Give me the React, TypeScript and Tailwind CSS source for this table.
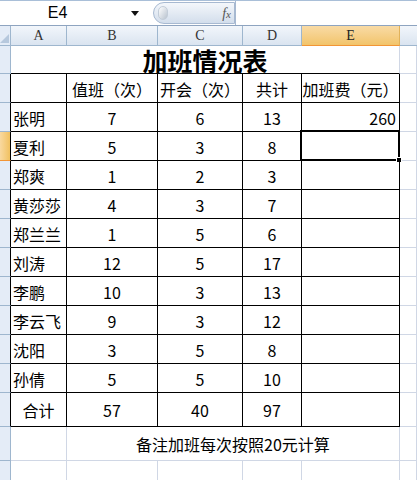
import React from 'react';

const rows: [string, string, string, string, string][] = [
  ['张明', '7', '6', '13', '260'],
  ['夏利', '5', '3', '8', ''],
  ['郑爽', '1', '2', '3', ''],
  ['黄莎莎', '4', '3', '7', ''],
  ['郑兰兰', '1', '5', '6', ''],
  ['刘涛', '12', '5', '17', ''],
  ['李鹏', '10', '3', '13', ''],
  ['李云飞', '9', '3', '12', ''],
  ['沈阳', '3', '5', '8', ''],
  ['孙倩', '5', '5', '10', ''],
];

const cjk = { fontFamily: '"Noto Sans CJK SC", "Noto Sans", sans-serif' };

function RowHead({ active, dark }: { active?: boolean; dark?: boolean }) {
  return (
    <div
      className={
        'border-b border-r ' +
        (active
          ? 'bg-gradient-to-r from-[#f9d99f] to-[#f1c15f] border-b-[#f29536] '
          : 'bg-[#e4ecf7] border-b-[#9eb6ce] ') +
        (dark ? 'border-r-black' : 'border-r-[#9eb6ce]')
      }
    />
  );
}

function Cell({
  children,
  align = 'center',
  selected,
}: {
  children?: React.ReactNode;
  align?: 'left' | 'center' | 'right';
  selected?: boolean;
}) {
  const a = align === 'left' ? 'justify-start pl-[2px]' : align === 'right' ? 'justify-end pr-[3px]' : 'justify-center';
  return (
    <div className={'relative flex items-center pt-[1px] border-b border-r border-black text-[16px] text-black leading-none whitespace-nowrap ' + a}>
      {children}
      {selected && (
        <div className="absolute -left-[2px] -top-[2px] -right-[1px] -bottom-[1px] border-2 border-black">
          <div className="absolute -right-[4px] -bottom-[4px] h-[6px] w-[6px] bg-black border border-white" />
        </div>
      )}
    </div>
  );
}

function Grey({ className = '' }: { className?: string }) {
  return <div className={'border-b border-r border-[#d0d7e5] ' + className} />;
}

export default function App() {
  const cols = ['A', 'B', 'C', 'D', 'E'];
  return (
    <div className="h-[480px] w-[417px] overflow-hidden bg-white flex flex-col" style={cjk}>
      <div className="h-[4px] bg-[#cfdcec] border-b border-[#a9bfd8]" />
      <div className="h-[25px] flex items-center bg-white">
        <div className="w-[115px] text-center text-[16px] text-black" style={{ fontFamily: '"Liberation Sans", Arial, sans-serif' }}>
          E4
        </div>
        <div className="w-[38px] flex justify-center">
          <svg width="8" height="5" viewBox="0 0 8 5" className="ml-[2px]">
            <path d="M0 0 L8 0 L4 5 Z" fill="#111" />
          </svg>
        </div>
        <div className="relative h-[22px] w-[82px] rounded-l-full border border-[#a7b9d1] bg-gradient-to-b from-[#f4f7fb] to-[#d3deec] flex items-center justify-end pr-[3px]">
          <div className="absolute left-[4px] top-[3px] h-[14px] w-[10px] rounded-full bg-gradient-to-br from-[#ffffff] to-[#b9c3cf] border border-[#c3cdd9]" />
          <span className="italic text-[14px] text-[#555]" style={{ fontFamily: '"Liberation Serif", serif' }}>
            f<span className="text-[11px]">x</span>
          </span>
        </div>
        <div className="flex-1 h-full border-l border-[#a7b9d1]" />
      </div>
      <div className="h-[3px] bg-[#dfe7f2] border-t border-[#8ea4c0]" />

      <div
        className="grid"
        style={{
          gridTemplateColumns: '11px 56px 91px 85px 59px 98px 1fr',
          gridTemplateRows: '20px 28px repeat(11, 29px) 34px 34px 40px',
        }}
      >
        {/* column headers */}
        <div className="relative bg-[#e4ecf7] border-b border-r border-[#9eb6ce]">
          <svg width="9" height="9" viewBox="0 0 9 9" className="absolute right-[1px] bottom-[2px]">
            <path d="M9 0 L9 9 L0 9 Z" fill="#b6c8dd" />
          </svg>
        </div>
        {cols.map((c) => (
          <div
            key={c}
            className={
              'flex items-center justify-center border-b border-r text-[14px] leading-none ' +
              (c === 'E'
                ? 'bg-gradient-to-b from-[#f9dba5] to-[#f2c46a] border-b-[#f29536] border-r-[#e1b25a] text-[#222]'
                : 'bg-gradient-to-b from-[#f2f6fb] to-[#dae4f0] border-[#9eb6ce] text-[#333]')
            }
            style={{ fontFamily: '"Liberation Serif", serif' }}
          >
            {c}
          </div>
        ))}
        <div className="bg-gradient-to-b from-[#f2f6fb] to-[#dae4f0] border-b border-[#9eb6ce]" />

        {/* title row */}
        <RowHead />
        <div className="col-span-5 flex items-center justify-center pt-[2px] border-b border-b-black border-r border-r-[#d0d7e5] text-[25px] font-bold leading-none text-black">
          加班情况表
        </div>
        <Grey />

        {/* header row */}
        <RowHead dark />
        <Cell />
        <Cell>值班（次）</Cell>
        <Cell>开会（次）</Cell>
        <Cell>共计</Cell>
        <Cell>加班费（元）</Cell>
        <Grey />

        {rows.map((r, i) => (
          <React.Fragment key={r[0]}>
            <RowHead dark active={i === 1} />
            <Cell align="left">{r[0]}</Cell>
            <Cell>{r[1]}</Cell>
            <Cell>{r[2]}</Cell>
            <Cell>{r[3]}</Cell>
            <Cell align="right" selected={i === 1}>
              {r[4]}
            </Cell>
            <Grey />
          </React.Fragment>
        ))}

        {/* total row */}
        <RowHead dark />
        <Cell>合计</Cell>
        <Cell>57</Cell>
        <Cell>40</Cell>
        <Cell>97</Cell>
        <Cell />
        <Grey />

        {/* note row */}
        <RowHead />
        <Grey />
        <div className="col-span-4 flex items-center justify-center border-b border-r border-[#d0d7e5] text-[16px] leading-none text-black">
          备注加班每次按照20元计算
        </div>
        <Grey />

        {/* empty row */}
        <RowHead />
        <Grey />
        <Grey />
        <Grey />
        <Grey />
        <Grey />
        <Grey />
      </div>
    </div>
  );
}
